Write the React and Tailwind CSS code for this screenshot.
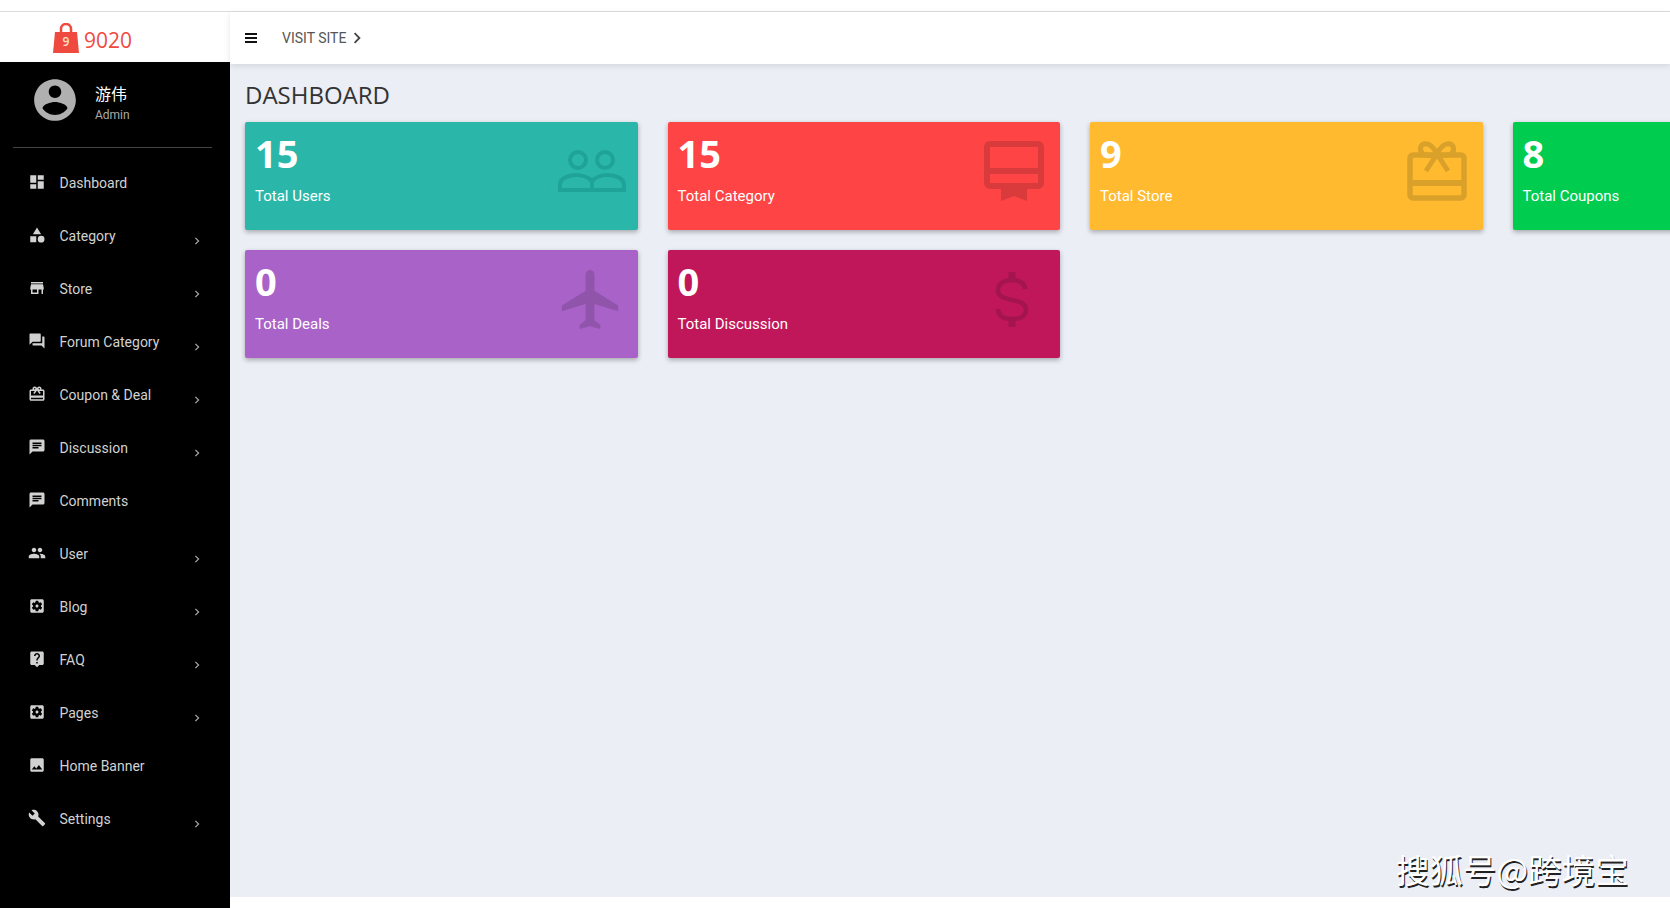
import React from "react";

const PATHS = {
  dashboard: "M3 13h8V3H3v10zm0 8h8v-6H3v6zm10 0h8V11h-8v10zm0-18v6h8V3h-8z",
  category: "M12 2l-5.5 9h11zM17.5 13a4.5 4.5 0 1 0 0 9 4.5 4.5 0 0 0 0-9zM3 13.5h8v8H3z",
  store: "M20 4H4v2h16V4zm1 10v-2l-1-5H4l-1 5v2h1v6h10v-6h4v6h2v-6h1zm-9 4H6v-4h6v4z",
  forum: "M21 6h-2v9H6v2c0 .55.45 1 1 1h11l4 4V7c0-.55-.45-1-1-1zm-4 6V3c0-.55-.45-1-1-1H3c-.55 0-1 .45-1 1v14l4-4h10c.55 0 1-.45 1-1z",
  gift: "M20 6h-2.18c.11-.31.18-.65.18-1 0-1.66-1.34-3-3-3-1.05 0-1.96.54-2.5 1.35l-.5.67-.5-.68C10.96 2.54 10.05 2 9 2 7.34 2 6 3.34 6 5c0 .35.07.69.18 1H4c-1.11 0-1.99.89-1.99 2L2 19c0 1.11.89 2 2 2h16c1.11 0 2-.89 2-2V8c0-1.11-.89-2-2-2zm-5-2c.55 0 1 .45 1 1s-.45 1-1 1-1-.45-1-1 .45-1 1-1zM9 4c.55 0 1 .45 1 1s-.45 1-1 1-1-.45-1-1 .45-1 1-1zm11 15H4v-2h16v2zm0-5H4V8h5.08L7 10.83 8.62 12 11 8.76l1-1.36 1 1.36L15.38 12 17 10.83 14.92 8H20v6z",
  chat: "M20 2H4c-1.1 0-1.99.9-1.99 2L2 22l4-4h14c1.1 0 2-.9 2-2V4c0-1.1-.9-2-2-2zM6 9h12v2H6V9zm8 5H6v-2h8v2zm4-6H6V6h12v2z",
  people: "M16 11c1.66 0 2.99-1.34 2.99-3S17.66 5 16 5c-1.66 0-3 1.34-3 3s1.34 3 3 3zm-8 0c1.66 0 2.99-1.34 2.99-3S9.66 5 8 5C6.34 5 5 6.34 5 8s1.34 3 3 3zm0 2c-2.33 0-7 1.17-7 3.5V19h14v-2.5c0-2.33-4.67-3.5-7-3.5zm8 0c-.29 0-.62.02-.97.05 1.16.84 1.97 1.97 1.97 3.45V19h6v-2.5c0-2.33-4.67-3.5-7-3.5z",
  gear: "M12 10c-1.1 0-2 .9-2 2s.9 2 2 2 2-.9 2-2-.9-2-2-2zm7-7H5c-1.11 0-2 .9-2 2v14c0 1.1.89 2 2 2h14c1.11 0 2-.9 2-2V5c0-1.1-.89-2-2-2zm-1.75 9c0 .23-.02.46-.05.68l1.48 1.16c.13.11.17.3.08.45l-1.4 2.42c-.09.15-.27.21-.43.15l-1.74-.7c-.36.28-.76.51-1.18.69l-.26 1.85c-.03.17-.18.3-.35.3h-2.8c-.17 0-.32-.13-.35-.29l-.26-1.85c-.43-.18-.82-.41-1.18-.69l-1.74.7c-.16.06-.34 0-.43-.15l-1.4-2.42c-.09-.15-.05-.34.08-.45l1.48-1.16c-.03-.23-.05-.46-.05-.69 0-.23.02-.46.05-.68l-1.48-1.16c-.13-.11-.17-.3-.08-.45l1.4-2.42c.09-.15.27-.21.43-.15l1.74.7c.36-.28.76-.51 1.18-.69l.26-1.85c.03-.17.18-.3.35-.3h2.8c.17 0 .32.13.35.29l.26 1.85c.43.18.82.41 1.18.69l1.74-.7c.16-.06.34 0 .43.15l1.4 2.42c.09.15.05.34-.08.45l-1.48 1.16c.03.23.05.46.05.69z",
  help: "M19 2H5c-1.11 0-2 .9-2 2v14c0 1.1.89 2 2 2h4l3 3 3-3h4c1.1 0 2-.9 2-2V4c0-1.1-.9-2-2-2zm-6 16h-2v-2h2v2zm2.07-7.75l-.9.92C13.45 11.9 13 12.5 13 14h-2v-.5c0-1.1.45-2.1 1.17-2.83l1.24-1.26c.37-.36.59-.86.59-1.41 0-1.1-.9-2-2-2s-2 .9-2 2H8c0-2.21 1.79-4 4-4s4 1.79 4 4c0 .88-.36 1.68-.93 2.25z",
  photo: "M21 19V5c0-1.1-.9-2-2-2H5c-1.1 0-2 .9-2 2v14c0 1.1.9 2 2 2h14c1.1 0 2-.9 2-2zM8.5 13.5l2.5 3.01L14.5 12l4.5 6H5l3.5-4.5z",
  build: "M22.7 19l-9.1-9.1c.9-2.3.4-5-1.5-6.9-2-2-5-2.4-7.4-1.3L9 6 6 9 1.6 4.7C.4 7.1.9 10.1 2.9 12.1c1.9 1.9 4.6 2.4 6.9 1.5l9.1 9.1c.4.4 1 .4 1.4 0l2.3-2.3c.5-.4.5-1.1.1-1.4z",
  account: "M12 2C6.48 2 2 6.48 2 12s4.48 10 10 10 10-4.48 10-10S17.52 2 12 2zm0 3c1.66 0 3 1.34 3 3s-1.34 3-3 3-3-1.34-3-3 1.34-3 3-3zm0 14.2c-2.5 0-4.71-1.28-6-3.22.03-1.99 4-3.08 6-3.08 1.99 0 5.97 1.09 6 3.08-1.29 1.94-3.5 3.22-6 3.22z",
  flight: "M21 16v-2l-8-5V3.5c0-.83-.67-1.5-1.5-1.5S10 2.67 10 3.5V9l-8 5v2l8-2.5V19l-2 1.5V22l3.5-1 3.5 1v-1.5L13 19v-5.5l8 2.5z",
};

const menu = [
  { label: "Dashboard", icon: "dashboard" },
  { label: "Category", icon: "category", sub: true },
  { label: "Store", icon: "store", sub: true },
  { label: "Forum Category", icon: "forum", sub: true },
  { label: "Coupon & Deal", icon: "gift", sub: true },
  { label: "Discussion", icon: "chat", sub: true },
  { label: "Comments", icon: "chat" },
  { label: "User", icon: "people", sub: true },
  { label: "Blog", icon: "gear", sub: true },
  { label: "FAQ", icon: "help", sub: true },
  { label: "Pages", icon: "gear", sub: true },
  { label: "Home Banner", icon: "photo" },
  { label: "Settings", icon: "build", sub: true },
];

function Icon({ name, className }) {
  return (
    <svg viewBox="0 0 24 24" fill="currentColor" fillRule="evenodd" className={className}>
      <path d={PATHS[name]} />
    </svg>
  );
}

function UsersIcon() {
  return (
    <svg viewBox="0 0 68 44" fill="none" stroke="currentColor" strokeWidth="4" className="w-[68px] h-[44px]">
      <circle cx="20" cy="11" r="8" />
      <circle cx="47" cy="11" r="8" />
      <path d="M2 41v-5c0-7 9-10 16-10s12 2 16 6c4-4 9-6 15-6 8 0 17 3 17 10v5z" />
      <path d="M34 32v9" />
    </svg>
  );
}

function CertIcon() {
  return (
    <svg viewBox="0 0 60 60" className="w-[60px] h-[60px]">
      <path
        fill="none"
        stroke="currentColor"
        strokeWidth="6"
        d="M6 3h48a3 3 0 0 1 3 3v36a3 3 0 0 1-3 3H6a3 3 0 0 1-3-3V6a3 3 0 0 1 3-3z"
      />
      <path fill="none" stroke="currentColor" strokeWidth="6" d="M3 30h54" />
      <path fill="currentColor" d="M17 44h26v16l-13-5-13 5z" />
    </svg>
  );
}

function GiftIcon() {
  return (
    <svg viewBox="0 0 60 60" fill="none" stroke="currentColor" strokeWidth="5.5" className="w-[60px] h-[60px]">
      <path d="M6 14h48a3 3 0 0 1 3 3v37a3 3 0 0 1-3 3H6a3 3 0 0 1-3-3V17a3 3 0 0 1 3-3z" />
      <path strokeWidth="6" d="M3 42h54" />
      <path strokeWidth="5" d="M30 13c-4-8-9-11-13-10-4 1-5 7-1 10 3 2 9 2 14 0zm0 0c4-8 9-11 13-10 4 1 5 7 1 10-3 2-9 2-14 0zm0 0L19 30m11-17l11 17" />
    </svg>
  );
}

function DollarIcon() {
  return (
    <svg viewBox="0 0 36 56" fill="none" stroke="currentColor" strokeWidth="4.5" className="w-[36px] h-[56px]">
      <path d="M31 18c0-6-6-9-13-9S4 12 4 19c0 14 28 6 28 20 0 6-6 9-14 9S4 45 4 38" />
      <path strokeWidth="7" d="M18 1v9M18 47v9" />
    </svg>
  );
}

const cards = [
  { value: "15", label: "Total Users", bg: "bg-[#2ab7aa]", iconBox: "pr-[12px] pt-[27px]", icon: <UsersIcon />, iconColor: "text-[#1fa398]" },
  { value: "15", label: "Total Category", bg: "bg-[#fe4444]", iconBox: "pr-[16px] pt-[19px]", icon: <CertIcon />, iconColor: "text-[#d93b3c]" },
  { value: "9", label: "Total Store", bg: "bg-[#ffba30]", iconBox: "pr-[16px] pt-[19px]", icon: <GiftIcon />, iconColor: "text-[#d9a12a]" },
  { value: "8", label: "Total Coupons", bg: "bg-[#00cc50]", iconBox: "", icon: null, iconColor: "" },
  { value: "0", label: "Total Deals", bg: "bg-[#a963c8]", iconBox: "pr-[11px] pt-[14px]", icon: <Icon name="flight" className="w-[71px] h-[71px]" />, iconColor: "text-[#9055ab]" },
  { value: "0", label: "Total Discussion", bg: "bg-[#c0175a]", iconBox: "pr-[30px] pt-[21px]", icon: <DollarIcon />, iconColor: "text-[#a4144f]" },
];

function StatCard({ card }) {
  return (
    <div className={`h-[108px] rounded-[2px] shadow-[0_2px_5px_rgba(0,0,0,0.3)] flex justify-between ${card.bg}`}>
      <div className="pl-[10px] text-white">
        <div className="mt-[10px] h-[42px] leading-[42px] text-[38px] font-bold font-['Open_Sans',sans-serif]">{card.value}</div>
        <div className="mt-[11px] text-[15px] leading-[22px] font-['Roboto',sans-serif]">{card.label}</div>
      </div>
      {card.icon && <div className={`${card.iconBox} ${card.iconColor}`}>{card.icon}</div>}
    </div>
  );
}

export default function App() {
  return (
    <div className="relative w-[1670px] h-[908px] overflow-hidden bg-white flex flex-col font-['Roboto',sans-serif]">
      {/* strip left over from the page above */}
      <div className="h-[12px] shrink-0 bg-white border-b border-[#dcdcdc]" />

      <div className="flex flex-1 min-h-0">
        <aside className="w-[230px] shrink-0 flex flex-col">
          <div className="h-[50px] shrink-0 bg-white flex items-center pl-[53px] gap-[5px]">
            <div className="relative w-[26px] h-[30px] mt-[1px]">
              <svg viewBox="0 0 26 30" className="w-[26px] h-[30px]">
                <path fill="none" stroke="#ef4a3f" strokeWidth="2.5" d="M8 11V6a5 5 0 0 1 10 0v5" />
                <path fill="#ef4a3f" d="M2 9h22l2 21H0z" />
              </svg>
              <span className="absolute left-0 right-0 top-[11px] text-center text-[#ffe0c8] text-[12px] leading-[16px] font-semibold font-['Open_Sans',sans-serif]">9</span>
            </div>
            <span className="mt-[6px] text-[21px] leading-[30px] text-[#ef4a3f] font-['Open_Sans',sans-serif]">9020</span>
          </div>

          <div className="flex-1 bg-black">
            <div className="ml-[13px] mr-[18px] h-[86px] border-b border-[#444] flex items-start pl-[17px] pt-[13px]">
              <Icon name="account" className="w-[50px] h-[50px] text-[#b0b0b0]" />
              <div className="ml-[15px]">
                <div className="mt-[7px] text-[16px] leading-[22px] text-white font-['Noto_Sans_CJK_SC',sans-serif]">游伟</div>
                <div className="mt-[3px] text-[12px] leading-[16px] text-[#aaa]">Admin</div>
              </div>
            </div>
            <nav className="mt-[8px]">
              {menu.map((item) => (
                <div key={item.label} className="h-[53px] flex items-center pl-[28px] text-[#d2d2d2]">
                  <Icon name={item.icon} className="w-[18px] h-[18px] shrink-0 mb-[2px]" />
                  <span className="ml-[13.5px] text-[14px] leading-[20px]">{item.label}</span>
                  {item.sub && (
                    <svg viewBox="0 0 10 10" fill="none" stroke="#aaa" strokeWidth="1.5" className="w-[8px] h-[8px] ml-auto mr-[29px] mt-[10px]">
                      <path d="M3 1l4 4-4 4" />
                    </svg>
                  )}
                </div>
              ))}
            </nav>
          </div>
        </aside>

        <div className="flex-1 min-w-0 flex flex-col">
          <header className="relative z-10 h-[52px] shrink-0 bg-white shadow-[0_2px_6px_rgba(0,0,0,0.1)] flex items-center pl-[15px] pb-[1px]">
            <div className="w-[12px] h-[10px] flex flex-col justify-between">
              <span className="h-[2px] bg-[#111]" />
              <span className="h-[2px] bg-[#111]" />
              <span className="h-[2px] bg-[#111]" />
            </div>
            <span className="ml-[25px] text-[14px] leading-[20px] text-[#555]">VISIT SITE</span>
            <svg viewBox="0 0 10 10" fill="none" stroke="#444" strokeWidth="1.5" className="w-[12px] h-[12px] ml-[5px]">
              <path d="M3 1l4 4-4 4" />
            </svg>
          </header>

          <main className="flex-1 min-h-0 bg-[#ebeef5] pl-[15px] pt-[16px] overflow-hidden">
            <h1 className="text-[24px] leading-[30px] text-[#333] font-['Open_Sans',sans-serif]">DASHBOARD</h1>
            <div className="mt-[12px] grid grid-cols-[repeat(4,392.5px)] gap-x-[30px] gap-y-[20px]">
              {cards.map((card) => (
                <StatCard key={card.label} card={card} />
              ))}
            </div>
          </main>
          <div className="h-[11px] shrink-0 bg-white" />
        </div>
      </div>

      {/* watermark sitting on top of the page */}
      <div className="absolute left-[1396px] top-[847px] text-[33.5px] leading-[44px] whitespace-nowrap text-white font-['Noto_Sans_CJK_SC',sans-serif] [text-shadow:1px_2px_0_#222]">
        搜狐号@跨境宝
      </div>
    </div>
  );
}
